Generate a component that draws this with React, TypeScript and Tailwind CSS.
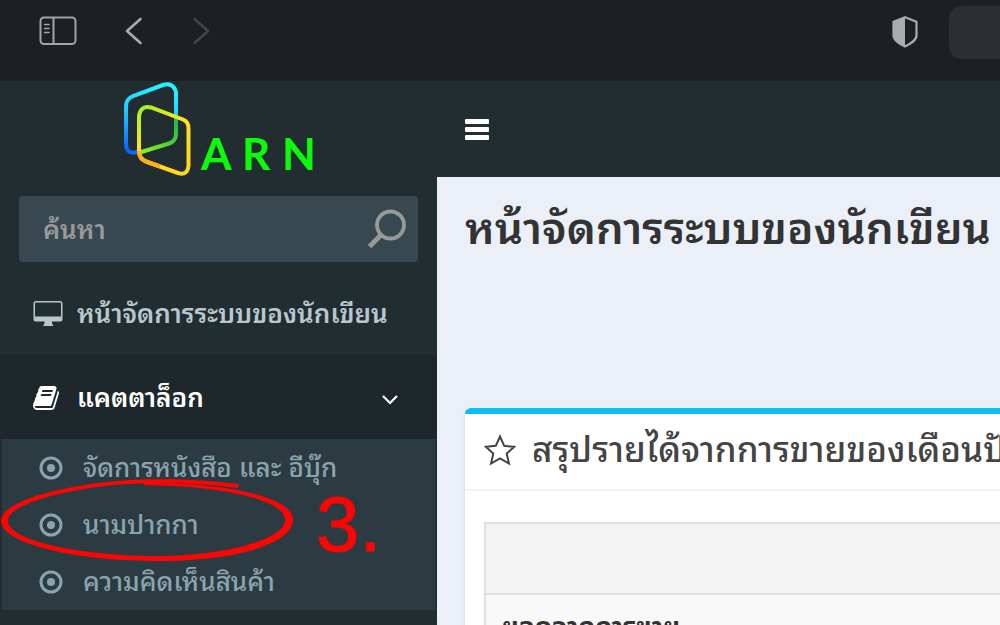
import { ReactNode } from "react";
import clsx from "clsx";

type SubItem = {
  label: string;
  href: string;
  marked?: boolean;
};

const subItems: SubItem[] = [
  { label: "จัดการหนังสือ และ อีบุ๊ก", href: "#books" },
  { label: "นามปากกา", href: "#pen-names", marked: true },
  { label: "ความคิดเห็นสินค้า", href: "#reviews" }
];

function SidebarIcon() {
  return (
    <svg viewBox="0 0 38 30" className="h-[30px] w-[38px]" fill="none" stroke="#a3a4a6" strokeWidth="2">
      <rect x="1.5" y="1.5" width="35" height="26.5" rx="3.5" />
      <path d="M14.5 2v26" />
      <path d="M5.5 8.5h4.500M5.500 12.500h4.500M5.500 16.500h4.500" strokeWidth="1.600" strokeLinecap="round" />
    </svg>
  );
}

function Chevron({ direction, className }: { direction: "left" | "right"; className?: string }) {
  return (
    <svg
      viewBox="0 0 18 28"
      className={clsx("h-7 w-[18px]", className)}
      fill="none"
      stroke="currentColor"
      strokeWidth="2.6"
      strokeLinecap="round"
      strokeLinejoin="round"
    >
      <path d={direction === "left" ? "M15.500 2 2 14l13.500 12" : "M2.500 2 16 14 2.500 26"} />
    </svg>
  );
}

function ShieldIcon() {
  return (
    <svg viewBox="0 0 28 34" className="h-[34px] w-7">
      <path
        d="M14 2.200 25.500 6.800v13.400c0 5-5.500 8.200-11.500 11.300C8 28.400 2.500 25.200 2.500 20.200V6.800Z"
        fill="none"
        stroke="#a9abad"
        strokeWidth="2.200"
        strokeLinejoin="round"
      />
      <path d="M14 2.200v29.300C8 28.400 2.500 25.200 2.500 20.200V6.800Z" fill="#a9abad" />
    </svg>
  );
}

function BrowserBar() {
  return (
    <header className="flex h-[81px] shrink-0 items-start justify-between overflow-hidden bg-[#1d1f21]">
      <div className="flex items-center pt-4 pl-[39px]">
        <button type="button" aria-label="Sidebar">
          <SidebarIcon />
        </button>
        <button type="button" aria-label="Back" className="ml-12 text-[#a9abad]">
          <Chevron direction="left" />
        </button>
        <button type="button" aria-label="Forward" className="ml-[49px] text-[#434547]">
          <Chevron direction="right" />
        </button>
      </div>
      <div className="flex items-start">
        <button type="button" aria-label="Privacy report" className="mt-[15px] mr-[30px]">
          <ShieldIcon />
        </button>
        <div className="mt-1.5 h-[53px] w-[51px] rounded-l-xl bg-[#2d2e30]" />
      </div>
    </header>
  );
}

function Logo() {
  return (
    <a href="#home" aria-label="ARN" className="flex h-24 items-start pl-[123px]">
      <svg viewBox="0 0 196 96" className="h-24 w-[196px] shrink-0" fill="none" strokeWidth="4">
        <defs>
          <linearGradient id="backFrame" gradientUnits="userSpaceOnUse" x1="35" y1="4" x2="22" y2="72">
            <stop offset="0" stopColor="#22f4ff" />
            <stop offset="0.45" stopColor="#22c8ff" />
            <stop offset="1" stopColor="#0a66ff" />
          </linearGradient>
          <linearGradient id="frontFrame" gradientUnits="userSpaceOnUse" x1="16" y1="30" x2="52" y2="80">
            <stop offset="0" stopColor="#a6f51c" />
            <stop offset="0.5" stopColor="#ffe526" />
            <stop offset="1" stopColor="#ffd91f" />
          </linearGradient>
          <linearGradient id="overlap" gradientUnits="userSpaceOnUse" x1="52" y1="38" x2="18" y2="70">
            <stop offset="0" stopColor="#20b84a" />
            <stop offset="1" stopColor="#8df21a" />
          </linearGradient>
        </defs>
        <path
          d="M15.500 70.500 12 71.500Q3.500 73 3 63V25Q3 18 10 15L40 4Q50 1 53 11V34"
          stroke="url(#backFrame)"
        />
        <path d="M53 34V53Q53 60 46 62.500L15 72" stroke="url(#overlap)" />
        <path
          d="M16 66V36Q17 24 28 26.500L60 38.500Q66 41 65.500 48V84Q65 95 55 92L23 80.500Q16 78 16 70Z"
          stroke="url(#frontFrame)"
        />
        <path d="M16 70Q16 78 23 80.500L37 85.500" stroke="#ffae1c" />
        <text x="78 119 159" y="89" fill="#0bfb0b" stroke="none" className="font-['Lato'] text-[44px] font-bold">
          ARN
        </text>
      </svg>
    </a>
  );
}

function SearchBox() {
  return (
    <form className="mx-[19px] mt-[19px] flex h-[66px] items-center rounded-[4px] bg-[#374850] pr-[11px] pl-6">
      <input
        type="text"
        aria-label="ค้นหา"
        placeholder="ค้นหา"
        className="min-w-0 flex-1 bg-transparent pt-0.5 text-[26px] font-semibold text-[#999] outline-none placeholder:text-[#999] placeholder:opacity-100"
      />
      <button type="button" aria-label="ค้นหา">
        <svg viewBox="0 0 40 40" className="size-10" fill="none" stroke="#999" strokeWidth="3.800">
          <circle cx="23.500" cy="16" r="13.500" />
          <path d="M14 26 2.500 37.500" strokeWidth="5" />
        </svg>
      </button>
    </form>
  );
}

function MonitorIcon() {
  return (
    <svg viewBox="0 0 30 26" className="h-[26px] w-[30px]" fill="currentColor">
      <path
        fillRule="evenodd"
        d="M3 0H27a2.500 2.500 0 0 1 2.500 2.500V18A2.500 2.500 0 0 1 27 20.500H19V22.500l1.500 2.500H10l1.500-2.500V20.500H3A2.500 2.500 0 0 1 .5 18V2.500A2.500 2.500 0 0 1 3 0ZM3 1.500a1 1 0 0 0-1 1V15.500H28V2.500a1 1 0 0 0-1-1Z"
      />
    </svg>
  );
}

function BookIcon() {
  return (
    <svg viewBox="0 128 1664 1536" className="h-6 w-[26px]" fill="currentColor">
      <path d="M1639 478q40 57 18 129l-275 906q-19 64-76.500 107.500t-122.500 43.500h-923q-77 0-148.500-53.500t-99.500-131.500q-24-67-2-127 0-4 3-27t4-37q1-8-3-21.500t-3-19.500q2-11 8-21t16.500-23.500 16.500-23.500q23-38 45-91.500t30-91.500q3-10 .5-30t-.5-28q3-11 17-28t17-23q21-36 42-92t25-90q1-9-2.500-32t.5-28q4-13 22-30.500t22-22.500q19-26 42.500-84.500t27.500-96.500q1-8-3-25.500t-2-26.500q2-8 9-18t18-23 17-21q8-12 16.500-30.500t15-35 16-36 19.500-32 26.500-23.500 36-11.500 47.500 5.500l-1 3q38-9 51-9h761q74 0 114 56t18 130l-274 906q-36 119-71.500 153.500t-128.500 34.500h-869q-27 0-38 15-11 16-1 43 24 70 144 70h923q29 0 56-15.500t35-41.500l300-987q7-22 5-57 38 15 59 43zm-1064 2q-4 13 2 22.500t20 9.500h608q13 0 25.500-9.500t16.500-22.500l21-64q4-13-2-22.500t-20-9.500h-608q-13 0-25.500 9.500t-16.500 22.500zm-83 256q-4 13 2 22.500t20 9.500h608q13 0 25.500-9.500t16.500-22.500l21-64q4-13-2-22.500t-20-9.500h-608q-13 0-25.500 9.500t-16.500 22.500z" />
    </svg>
  );
}

function MenuLink({
  icon,
  label,
  href,
  active = false
}: {
  icon: ReactNode;
  label: string;
  href: string;
  active?: boolean;
}) {
  return (
    <a
      href={href}
      className={clsx(
        "flex h-[84px] items-center pt-0.5 pl-[33px] text-[26px] leading-10 font-semibold whitespace-nowrap",
        active ? "bg-[#1e282c] text-white" : "text-[#b8c7ce]"
      )}
    >
      <span className="flex w-11 shrink-0 items-center">{icon}</span>
      <span>{label}</span>
      {active && (
        <svg
          viewBox="0 0 18 12"
          className="mt-1 mr-[38px] ml-auto h-3 w-[18px] shrink-0"
          fill="none"
          stroke="currentColor"
          strokeWidth="2.200"
        >
          <path d="M2 2l7 7 7-7" />
        </svg>
      )}
    </a>
  );
}

function MarkerCircle() {
  return (
    <svg
      viewBox="0 0 294 84"
      className="pointer-events-none absolute -top-[18px] -left-[2px] h-[84px] w-[294px]"
      fill="#fb0505"
    >
      <path d="M239 6C190 0 130-1 85 7 30 16 1 29 1 43 2 66 75 82 150 83c80 1 144-16 143-42C292 18 220 4 144 5v2c80 1 139 15 141 34 2 21-65 38-135 37C80 77 9 63 8 43 8 30 40 18 90 10 135 3 190 4 238 10Z" />
    </svg>
  );
}

function Sidebar() {
  return (
    <aside className="w-[437px] shrink-0 bg-[#222d32]">
      <Logo />
      <SearchBox />
      <nav className="mt-[9px]">
        <MenuLink icon={<MonitorIcon />} label="หน้าจัดการระบบของนักเขียน" href="#dashboard" />
        <MenuLink icon={<BookIcon />} label="แคตตาล็อก" href="#catalog" active />
        <ul className="mx-[2px] bg-[#2c3b41]">
          {subItems.map((item) => (
            <li key={item.href} className="relative">
              <a
                href={item.href}
                className="flex h-[57px] items-center pl-[37px] text-[26px] leading-10 font-medium whitespace-nowrap text-[#8aa4af]"
              >
                <svg viewBox="0 0 24 24" className="mr-5 size-6 shrink-0" fill="none" stroke="currentColor" strokeWidth="3">
                  <circle cx="12" cy="12" r="10" />
                  <circle cx="12" cy="12" r="4" fill="currentColor" stroke="none" />
                </svg>
                {item.label}
              </a>
              {item.marked && (
                <>
                  <MarkerCircle />
                  <span className="pointer-events-none absolute -top-3 left-[314px] text-[78px] leading-[80px] text-[#fb0505] [-webkit-text-stroke:1px_#fb0505]">
                    3.
                  </span>
                </>
              )}
            </li>
          ))}
        </ul>
      </nav>
    </aside>
  );
}

function IncomeBox() {
  return (
    <section className="mr-[-30px] rounded-t-[6px] border-t-[6px] border-[#0dbef0] bg-white shadow-sm">
      <h2 className="flex h-[77px] items-center border-b-2 border-[#f4f4f4] pb-1 pl-[19px] text-[35px] leading-[48px] font-medium whitespace-nowrap text-[#444]">
        <svg viewBox="0 0 32 32" className="mr-4 size-8 shrink-0" fill="none" stroke="currentColor" strokeWidth="2">
          <path d="M16 2.500l4.200 9.300 10 1-7.500 6.800 2.300 10L16 24.500l-9 5.100 2.300-10L1.800 12.800l10-1Z" />
        </svg>
        สรุปรายได้จากการขายของเดือนปัจจุบัน
      </h2>
      <div className="px-[19px] pt-[31px]">
        <table className="w-full border-collapse text-left">
          <thead>
            <tr>
              <th className="h-[71px] border-2 border-[#e0e0e0] bg-[#f3f3f3]" />
            </tr>
          </thead>
          <tbody>
            <tr>
              <td className="border-2 border-[#e0e0e0] bg-[#f9f9f9] px-4 py-3 text-[26px] leading-10 font-bold whitespace-nowrap text-[#333]">
                ยอดจากการขาย
              </td>
            </tr>
          </tbody>
        </table>
      </div>
    </section>
  );
}

export default function App() {
  return (
    <div className="flex h-screen flex-col overflow-hidden bg-[#222d32] font-['Liberation_Sans','Noto_Sans_Thai_Looped','Noto_Looped_Thai','Loma','Garuda',sans-serif]">
      <BrowserBar />
      <div className="flex min-h-0 flex-1">
        <Sidebar />
        <div className="flex min-w-0 flex-1 flex-col overflow-hidden">
          <div className="flex h-24 shrink-0 items-center bg-[#222d32] pl-7">
            <button type="button" aria-label="Menu" className="flex w-6 flex-col gap-[3px]">
              <span className="h-[5px] w-full rounded-[1px] bg-white" />
              <span className="h-[5px] w-full rounded-[1px] bg-white" />
              <span className="h-[5px] w-full rounded-[1px] bg-white" />
            </button>
          </div>
          <main className="flex-1 bg-[#ebeff7] pl-7">
            <h1 className="h-[231px] pt-5 text-[44px] leading-[64px] font-semibold whitespace-nowrap text-[#333]">
              หน้าจัดการระบบของนักเขียน
            </h1>
            <IncomeBox />
          </main>
        </div>
      </div>
    </div>
  );
}
